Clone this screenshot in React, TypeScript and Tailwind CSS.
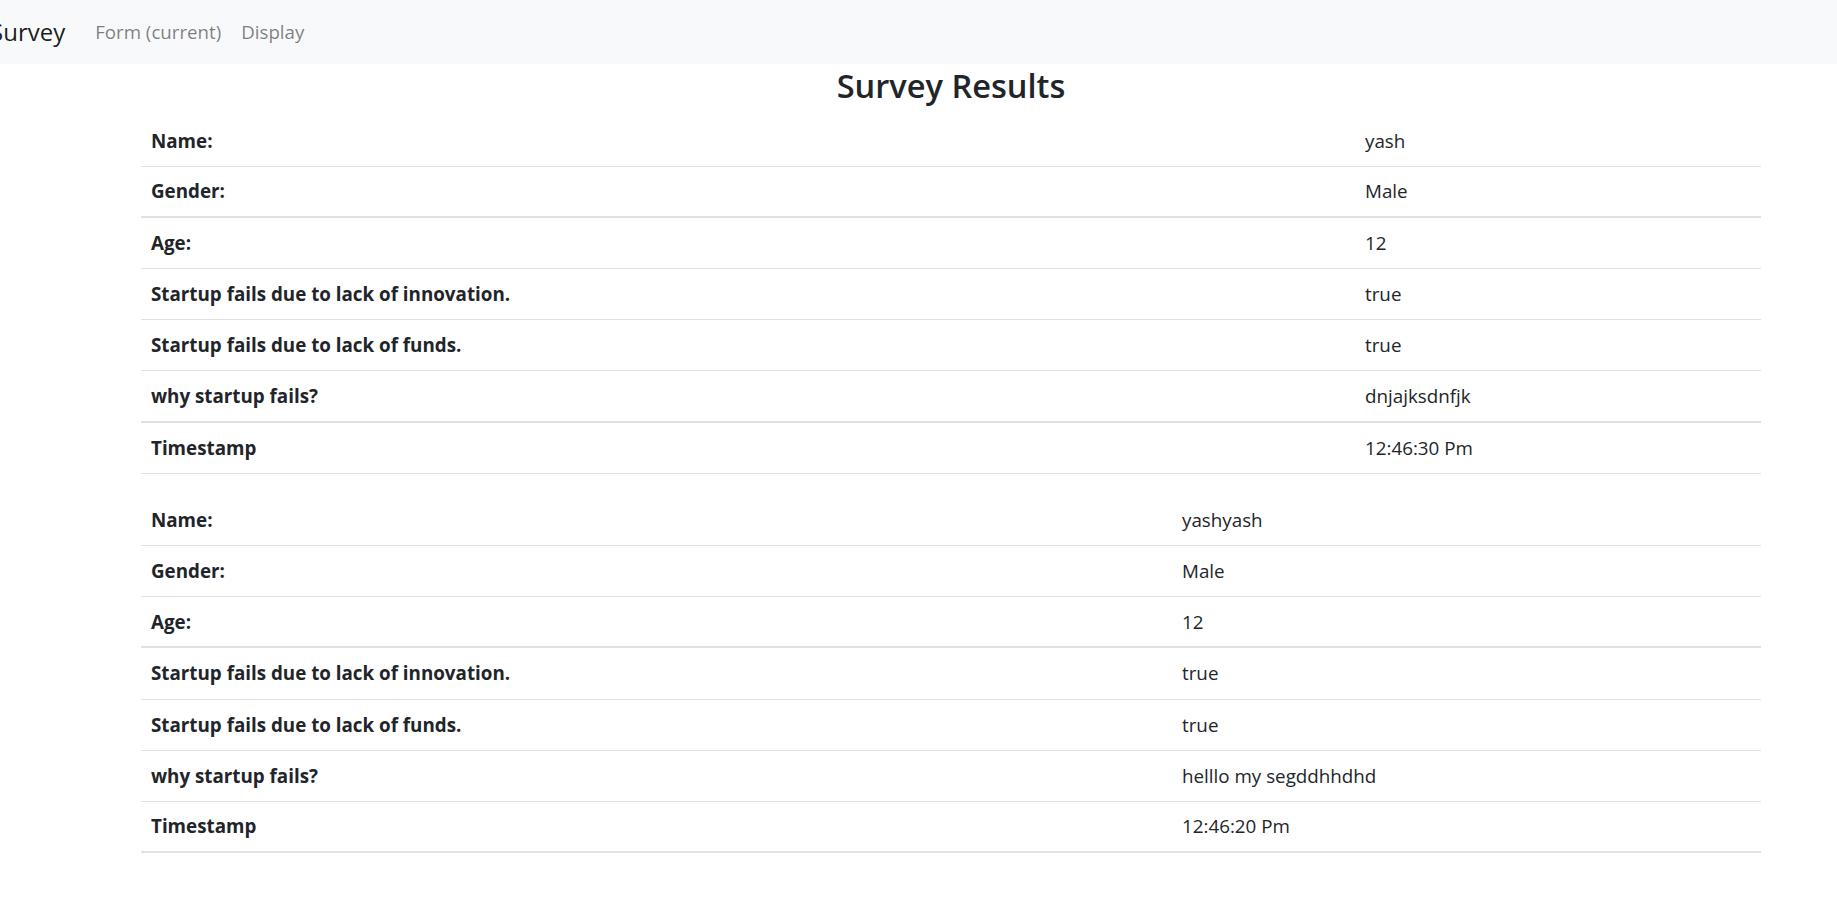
import React from "react";

type Entry = {
  name: string;
  gender: string;
  age: string;
  innovation: string;
  funds: string;
  why: string;
  time: string;
};

const results: Entry[] = [
  {
    name: "yash",
    gender: "Male",
    age: "12",
    innovation: "true",
    funds: "true",
    why: "dnjajksdnfjk",
    time: "12:46:30 Pm",
  },
  {
    name: "yashyash",
    gender: "Male",
    age: "12",
    innovation: "true",
    funds: "true",
    why: "helllo my segddhhdhd",
    time: "12:46:20 Pm",
  },
];

// label column width differs per table (auto table layout in the original)
const labelWidths = ["w-[1224px]", "w-[1041px]"];
// rows whose bottom rule renders heavier in the screenshot
const heavyRows = [
  [1, 5],
  [2, 6],
];

const ResultTable = ({ entry, index }: { entry: Entry; index: number }) => {
  const rows: [string, string][] = [
    ["Name:", entry.name],
    ["Gender:", entry.gender],
    ["Age:", entry.age],
    ["Startup fails due to lack of innovation.", entry.innovation],
    ["Startup fails due to lack of funds.", entry.funds],
    ["why startup fails?", entry.why],
    ["Timestamp", entry.time],
  ];

  return (
    <div className="flex flex-col w-[1620px]">
      {rows.map(([label, value], i) => (
        <div
          key={label}
          className={`flex items-center h-[51.2px] border-[#dee2e6] ${
            heavyRows[index].includes(i) ? "border-b-2" : "border-b"
          }`}
        >
          <div className={`${labelWidths[index]} shrink-0 pl-[10px] font-bold`}>
            {label}
          </div>
          <div>{value}</div>
        </div>
      ))}
    </div>
  );
};

export default function App() {
  return (
    <div
      className="min-h-screen bg-white text-[#212529] text-[18.8px]"
      style={{ fontFamily: "'Open Sans', 'Noto Sans', sans-serif" }}
    >
      <nav className="flex items-center h-[63.5px] bg-[#f8f9fa] overflow-hidden">
        <span className="-ml-[10px] text-[24px] text-black/90 mr-[30px]">Survey</span>
        <a className="text-[18.7px] text-black/50 mr-[20px]">Form (current)</a>
        <a className="text-[18.7px] text-black/50">Display</a>
      </nav>

      <div className="pl-[141px]">
        <h2 className="w-[1620px] h-[52px] flex items-center justify-center text-[32.6px] font-semibold pb-[7px]">
          Survey Results
        </h2>
        <div className="flex flex-col gap-[21px]">
          {results.map((entry, i) => (
            <ResultTable key={i} entry={entry} index={i} />
          ))}
        </div>
      </div>
    </div>
  );
}
